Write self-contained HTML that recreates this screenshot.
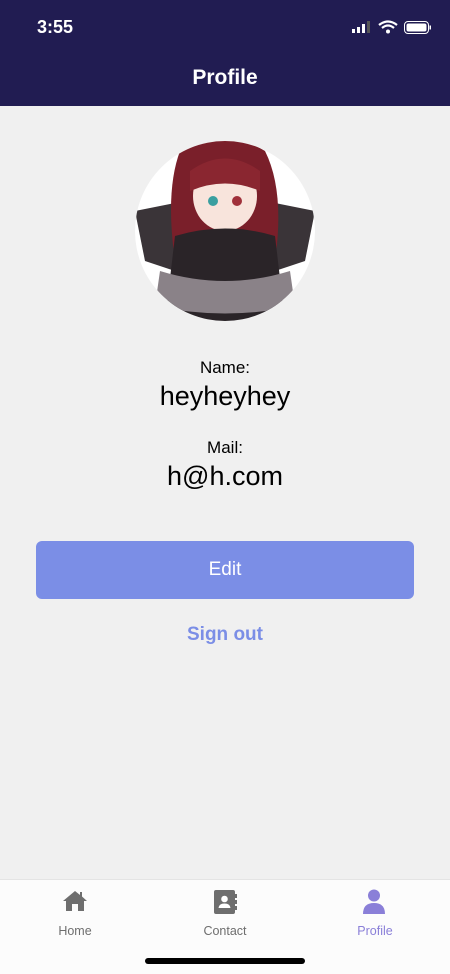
<!DOCTYPE html>
<html><head><meta charset="utf-8"><style>
*{margin:0;padding:0;box-sizing:border-box}
body{width:450px;height:974px;background:#f0f0f0;font-family:"Liberation Sans",sans-serif;position:relative;overflow:hidden}
.top{position:absolute;left:0;top:0;width:450px;height:106px;background:#211c52;color:#fff}
.time{position:absolute;left:37px;top:17px;font-size:18px;font-weight:bold}
.title{position:absolute;top:66px;width:100%;text-align:center;font-size:21px;font-weight:bold}
.t{position:absolute;width:100%;text-align:center;color:#000}
.btn{position:absolute;left:36px;top:541px;width:378px;height:58px;border-radius:6px;background:#7b8ee6;color:#fff;font-size:19px;text-align:center;line-height:58px}
.so{position:absolute;top:624px;width:100%;text-align:center;color:#7b8ee6;font-size:19px;font-weight:bold}
.tab{position:absolute;left:0;top:879px;width:450px;height:95px;background:#fcfcfc;border-top:1px solid #e4e4e4}
.lab{position:absolute;top:44px;width:150px;text-align:center;font-size:12.5px;color:#6e6e6e}
.bar{position:absolute;left:145px;top:958px;width:160px;height:6px;border-radius:3px;background:#000}
</style></head><body>
<div class="top">
<div class="time">3:55</div>
<svg style="position:absolute;left:352px;top:20px" width="80" height="16">
<rect x="0" y="9" width="3" height="4" fill="#fff"/><rect x="5" y="7" width="3" height="6" fill="#fff"/><rect x="10" y="4" width="3" height="9" fill="#fff"/><rect x="15" y="1" width="3" height="12" fill="#555"/>
<path d="M27 5 Q36 -2 45 5" stroke="#fff" stroke-width="2.2" fill="none"/><path d="M30 8 Q36 3 42 8" stroke="#fff" stroke-width="2.2" fill="none"/><circle cx="36" cy="11.5" r="2" fill="#fff"/>
<rect x="52.5" y="1.5" width="24" height="12" rx="3.5" stroke="#fff" fill="none"/><rect x="54.5" y="3.5" width="20" height="8" rx="2" fill="#fff"/><rect x="77.5" y="5.5" width="1.5" height="4" fill="#fff"/>
</svg>
<div class="title">Profile</div>
</div>
<svg style="position:absolute;left:135px;top:141px" width="180" height="180">
<defs><clipPath id="c"><circle cx="90" cy="90" r="90"/></clipPath></defs>
<g clip-path="url(#c)">
<rect width="180" height="180" fill="#fff"/>
<path d="M0 70 L50 60 L40 130 L10 120Z" fill="#3a3438"/>
<path d="M180 70 L130 60 L140 130 L170 120Z" fill="#3a3438"/>
<path d="M45 10 Q90 -15 130 10 Q150 50 140 120 L40 120 Q30 50 45 10Z" fill="#7a1f2a"/>
<ellipse cx="90" cy="55" rx="32" ry="35" fill="#f8e4dc"/>
<path d="M55 30 Q90 5 125 30 L125 50 Q90 35 55 50Z" fill="#8a2630"/>
<path d="M40 95 Q90 80 140 95 L150 180 L30 180Z" fill="#2a2428"/>
<path d="M25 130 Q90 150 155 130 L160 165 Q90 180 20 165Z" fill="#8a8288"/>
<circle cx="78" cy="60" r="5" fill="#3a9fa0"/><circle cx="102" cy="60" r="5" fill="#a0303a"/>
</g></svg>
<div class="t" style="top:358px;font-size:17px">Name:</div>
<div class="t" style="top:381px;font-size:27px">heyheyhey</div>
<div class="t" style="top:438px;font-size:17px">Mail:</div>
<div class="t" style="top:461px;font-size:27px">h@h.com</div>
<div class="btn">Edit</div>
<div class="so">Sign out</div>
<div class="tab">
<svg style="position:absolute;left:62px;top:10px" width="26" height="22"><path d="M13 1 L1 11 L4 11 L4 21 L10 21 L10 14 L16 14 L16 21 L22 21 L22 11 L25 11 L20 6.5 L20 2 L18 2 L18 5 Z" fill="#6e6e6e"/></svg>
<svg style="position:absolute;left:213px;top:9px" width="24" height="26"><rect x="1" y="1" width="21" height="24" rx="2" fill="#6e6e6e"/><rect x="22" y="5" width="2" height="4" fill="#6e6e6e"/><rect x="22" y="11" width="2" height="4" fill="#6e6e6e"/><rect x="22" y="17" width="2" height="4" fill="#6e6e6e"/><circle cx="11.5" cy="10" r="3.3" fill="#fff"/><path d="M5.5 19 Q6 14.5 11.5 14.5 Q17 14.5 17.5 19Z" fill="#fff"/></svg>
<svg style="position:absolute;left:362px;top:9px" width="24" height="26"><circle cx="12" cy="6.5" r="6" fill="#8a7fd8"/><path d="M1 25 Q1 14 12 14 Q23 14 23 25Z" fill="#8a7fd8"/></svg>
<div class="lab" style="left:0">Home</div>
<div class="lab" style="left:150px">Contact</div>
<div class="lab" style="left:300px;color:#8a7fd8">Profile</div>
</div>
<div class="bar"></div>
</body></html>
